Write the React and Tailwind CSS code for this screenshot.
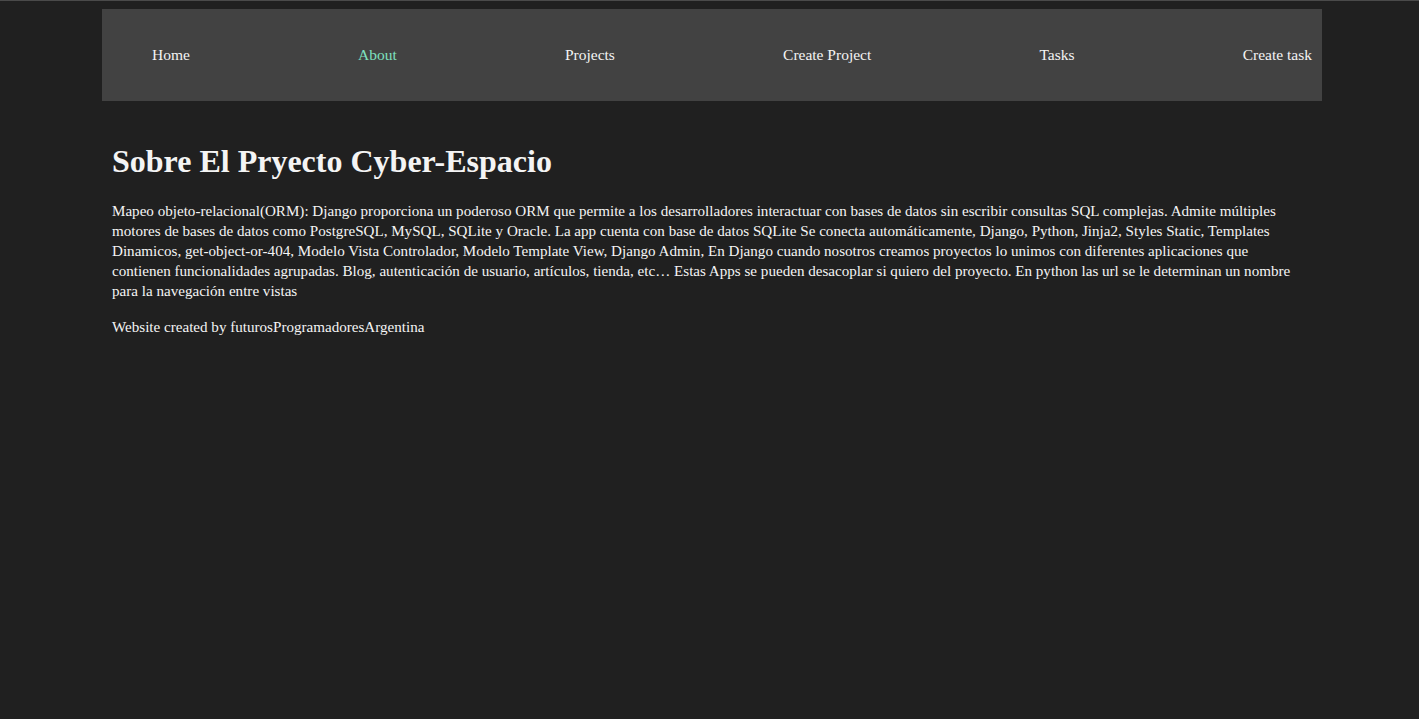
export default function App() {
  const links = ["Home", "About", "Projects", "Create Project", "Tasks", "Create task"];
  return (
    <div className="min-h-[719px] bg-[#202020] border-t border-[#4a4a4a] text-[#f4f4f4]" style={{ fontFamily: '"Liberation Serif", "Times New Roman", serif' }}>
      <div className="w-[1220px] ml-[102px] pt-[8px]">
        <nav className="bg-[#424242] h-[92px] flex items-center pl-[40px]">
          <ul className="flex justify-between w-full">
            {links.map((l) => (
              <li key={l} className="px-[10px]">
                <a className={`text-[15.5px] ${l === "About" ? "text-[#7ee0bf]" : "text-[#f4f4f4]"}`}>{l}</a>
              </li>
            ))}
          </ul>
        </nav>
        <div className="pl-[10px] pr-[22px]">
          <h1 className="text-[32px] font-bold mt-[42px] mb-[21px] leading-[37px]">Sobre El Pryecto Cyber-Espacio</h1>
          <p className="text-[15.1px] leading-[20px] mb-[16px]">
            Mapeo objeto-relacional(ORM): Django proporciona un poderoso ORM que permite a los desarrolladores interactuar con bases de datos sin escribir consultas SQL complejas. Admite múltiples motores de bases de datos como PostgreSQL, MySQL, SQLite y Oracle. La app cuenta con base de datos SQLite Se conecta automáticamente, Django, Python, Jinja2, Styles Static, Templates Dinamicos, get-object-or-404, Modelo Vista Controlador, Modelo Template View, Django Admin, En Django cuando nosotros creamos proyectos lo unimos con diferentes aplicaciones que contienen funcionalidades agrupadas. Blog, autenticación de usuario, artículos, tienda, etc… Estas Apps se pueden desacoplar si quiero del proyecto. En python las url se le determinan un nombre para la navegación entre vistas
          </p>
          <p className="text-[15.1px] leading-[20px]">Website created by futurosProgramadoresArgentina</p>
        </div>
      </div>
    </div>
  );
}
